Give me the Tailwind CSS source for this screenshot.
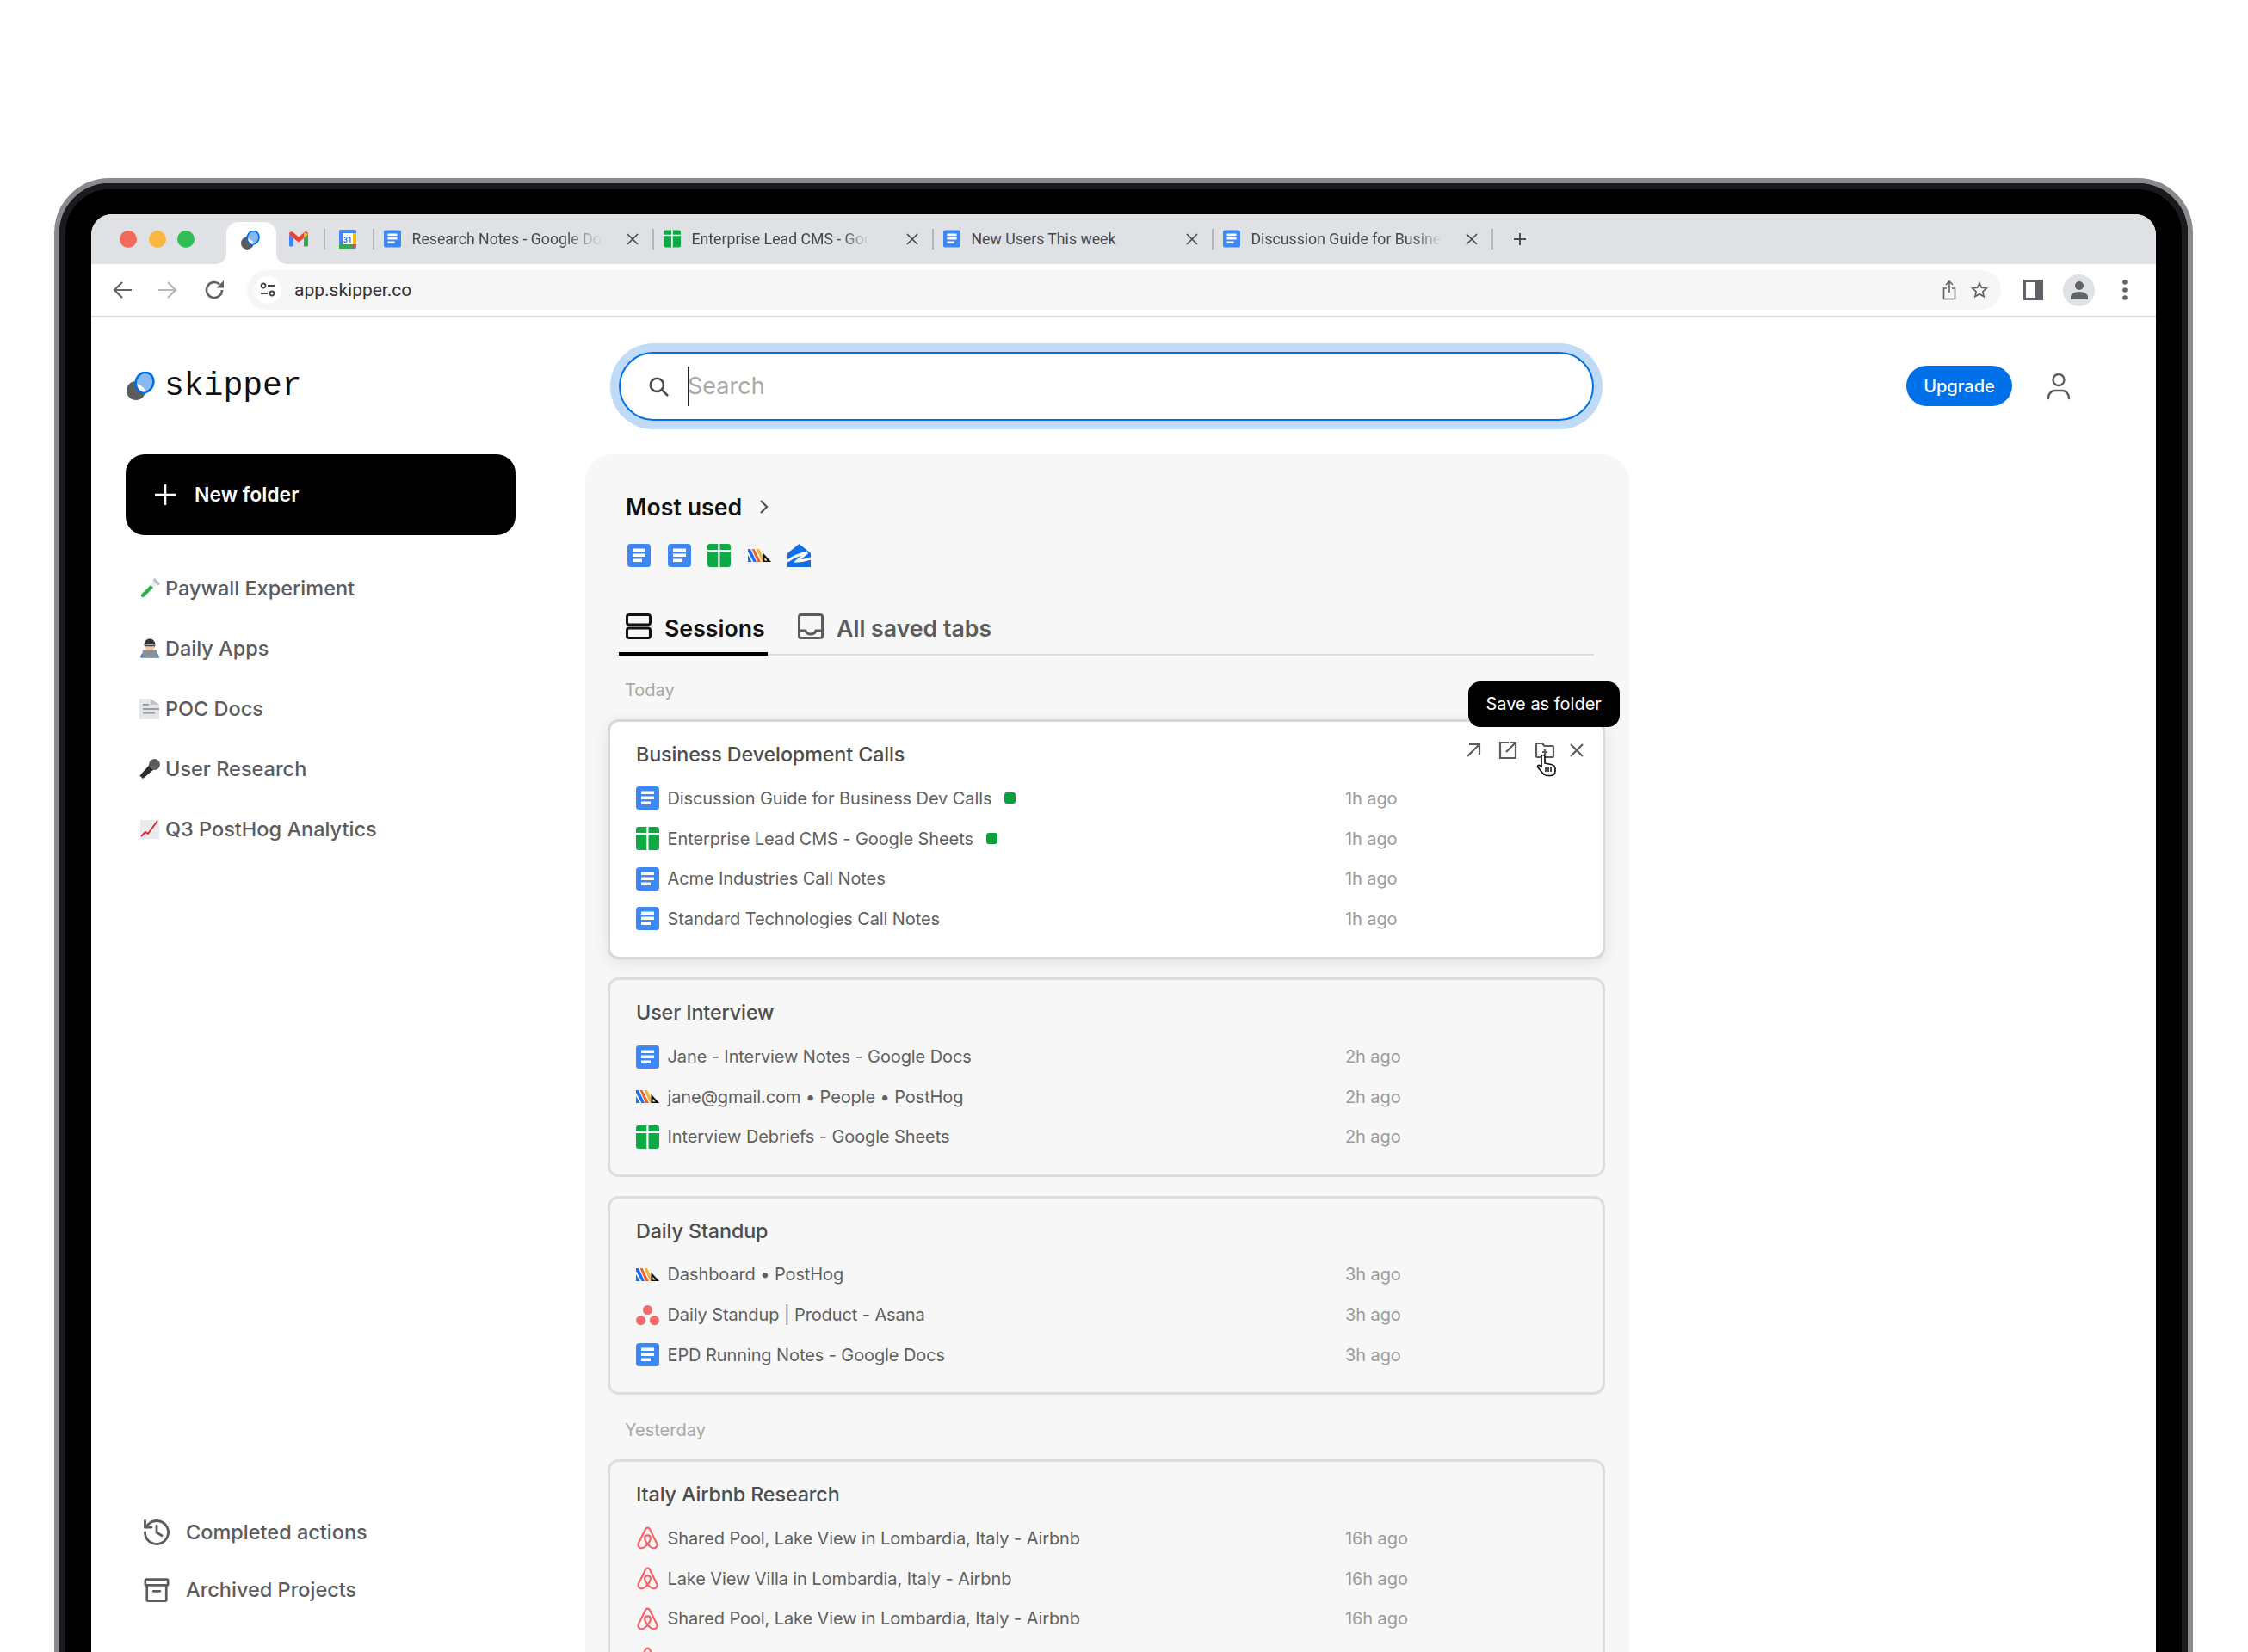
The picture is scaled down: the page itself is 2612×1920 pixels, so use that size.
<!DOCTYPE html>
<html lang="en">
<head>
    <meta charset="UTF-8">
    <meta name="viewport" content="width=device-width, initial-scale=1.0">
    <title>Skipper</title>
    <script src="https://cdn.jsdelivr.net/npm/@tailwindcss/browser@4"></script>
</head>
<body class="bg-white h-[1920px] overflow-hidden pt-[207px] pl-[63px] font-[family-name:Inter]">

    <!-- Shared favicons -->
    <svg class="hidden">
        <symbol id="docs" viewBox="0 0 27 27">
            <rect width="27" height="27" rx="3.5" fill="#3f87f2"/>
            <path d="M6 5.5h15v3.5H6zM6 11.5h15v3.5H6zM6 17.5h11v3.5H6z" fill="#fff"/>
        </symbol>
        <symbol id="sheets" viewBox="0 0 27 27">
            <rect width="27" height="27" rx="3" fill="#0fa945"/>
            <path d="M0 7h27v2H0zM12.300 0h2.200v27h-2.200z" fill="#fff"/>
        </symbol>
        <symbol id="posthog" viewBox="0 0 27 27">
            <path d="M0 6 L3 6 L10 21 H6.5 L0 9 Z M0 13 L4.5 21 H0 Z" fill="#1d6fe8"/>
            <path d="M4.5 6 H7.5 L15 21 H11 Z" fill="#f2622e"/>
            <path d="M9.5 6 H13 L19 18 V21 H16.5 Z" fill="#f5b33c"/>
            <path d="M17.5 10.5 L27 21 H17.5 Z" fill="#111"/>
            <path d="M19.5 16 L22.5 19.5 H19.5 Z" fill="#fff"/>
        </symbol>
        <symbol id="asana" viewBox="0 0 27 27">
            <circle cx="13.5" cy="7.5" r="5.6" fill="#f96a6c"/>
            <circle cx="5.6" cy="19.6" r="5.6" fill="#f96a6c"/>
            <circle cx="21.4" cy="19.6" r="5.6" fill="#f96a6c"/>
        </symbol>
        <symbol id="airbnb" viewBox="0 0 24 24">
            <path d="M12 1.5c-1 0-1.8.6-2.3 1.6L2.6 17.4c-.9 2.2-.1 4.2 1.7 4.8 2.1.7 4.8-.5 7.7-3.9-2.100-2.600-3-4.600-3-6.100 0-1.700 1.300-3 3-3s3 1.300 3 3c0 1.500-.9 3.500-3 6.100 2.900 3.400 5.600 4.600 7.700 3.900 1.800-.6 2.600-2.600 1.700-4.800L14.300 3.100C13.800 2.100 13 1.500 12 1.500z" fill="none" stroke="#fb5f63" stroke-width="1.900" stroke-linejoin="round"/>
        </symbol>
        <symbol id="tabx" viewBox="0 0 16 16">
            <path d="M2 2l12 12M14 2L2 14" fill="none" stroke="#45474a" stroke-width="1.600"/>
        </symbol>
        <symbol id="logo" viewBox="0 0 33 33">
            <circle cx="11" cy="22" r="11" fill="#5c5c5e"/>
            <ellipse cx="21" cy="12.5" rx="10.2" ry="11.8" transform="rotate(18 21 12.5)" fill="#8ab8f3" stroke="#0070e8" stroke-width="2.6"/>
            <path d="M12.5 14 C16 15 21 19 23 23 C19 25 13 22 12.5 14Z" fill="#fff"/>
        </symbol>
    </svg>

    <!-- Laptop bezel -->
    <div class="w-[2485px] h-[1760px] bg-black border-[6px] border-[#8a8a8e] rounded-t-[64px]">
        <div class="h-full border-[7px] border-[#1b1b1d] rounded-t-[58px] pt-[29px] px-[30px]">
            <div class="h-full bg-white rounded-t-[24px] overflow-hidden flex flex-col">

                <!-- Chrome tab strip -->
                <div class="h-[58px] shrink-0 bg-[#dfe1e5] flex items-center pl-[33px] font-[family-name:Roboto] text-[17.700px] text-[#45474a]">
                    <span class="w-5 h-5 rounded-full bg-[#f4695d]"></span>
                    <span class="w-5 h-5 rounded-full bg-[#f8b740] ml-[13.5px]"></span>
                    <span class="w-5 h-5 rounded-full bg-[#2fbe55] ml-[13.5px]"></span>
                    <div class="relative self-end ml-[36.5px] w-[58px] h-[49px] bg-white rounded-t-[14px] flex items-center justify-center pb-[8px] pr-[2px]">
                        <span class="absolute bottom-0 -left-3 w-3 h-3 bg-[radial-gradient(circle_at_0_0,transparent_11.5px,white_12px)]"></span>
                        <span class="absolute bottom-0 -right-3 w-3 h-3 bg-[radial-gradient(circle_at_100%_0,transparent_11.5px,white_12px)]"></span>
                        <svg class="w-[22px] h-[22px]"><use href="#logo"/></svg>
                    </div>
                    <svg class="ml-[15px] w-[22px] h-[18px]" viewBox="0 0 22 18">
                        <path d="M0 3v13a1.500 1.500 0 0 0 1.500 1.500H5V8z" fill="#4285f4"/>
                        <path d="M17 8v9.500h3.500A1.500 1.500 0 0 0 22 16V3z" fill="#34a853"/>
                        <path d="M0 3c0-2.500 2.800-3.500 4.500-2L11 6.500l6.500-5.500C19.200-.5 22 .5 22 3l-5 5-6 4.500L5 8z" fill="#ea4335"/>
                        <path d="M17 1.200 22 3l-5 5z" fill="#fbbc04"/>
                    </svg>
                    <span class="ml-[18px] w-[2px] h-6 bg-[#b4b6ba]"></span>
                    <svg class="ml-[16.500px] w-5 h-[22px]" viewBox="0 0 20 22">
                        <rect width="20" height="22" rx="2" fill="#4285f4"/>
                        <rect x="4" y="4" width="12" height="13" fill="#fff"/>
                        <rect x="16" y="4" width="4" height="13" fill="#fbbc04"/>
                        <rect y="17" width="16" height="5" fill="#34a853"/>
                        <path d="M16 17h4v1l-4 4z" fill="#ea4335"/>
                        <text x="10" y="14.500" text-anchor="middle" font-size="8.500" font-weight="700" fill="#1a73e8">31</text>
                    </svg>
                    <span class="ml-[18.500px] w-[2px] h-6 bg-[#b4b6ba]"></span>

                    <div class="flex w-[325px] items-center pl-[11px]">
                        <svg class="w-5 h-[21px]"><use href="#docs"/></svg>
                        <span class="ml-[13px] w-[221px] overflow-hidden whitespace-nowrap [mask-image:linear-gradient(to_right,black_80%,transparent)]">Research Notes - Google Docs</span>
                        <svg class="ml-[27px] w-4 h-4"><use href="#tabx"/></svg>
                        <span class="ml-auto w-[2px] h-6 bg-[#b4b6ba]"></span>
                    </div>
                    <div class="flex w-[325px] items-center pl-[11px]">
                        <svg class="w-5 h-[21px]"><use href="#sheets"/></svg>
                        <span class="ml-[13px] w-[206px] overflow-hidden whitespace-nowrap [mask-image:linear-gradient(to_right,black_85%,transparent)]">Enterprise Lead CMS - Google Sheets</span>
                        <svg class="ml-[42px] w-4 h-4"><use href="#tabx"/></svg>
                        <span class="ml-auto w-[2px] h-6 bg-[#b4b6ba]"></span>
                    </div>
                    <div class="flex w-[325px] items-center pl-[11px]">
                        <svg class="w-5 h-[21px]"><use href="#docs"/></svg>
                        <span class="ml-[13px] w-[221px] overflow-hidden whitespace-nowrap">New Users This week</span>
                        <svg class="ml-[27px] w-4 h-4"><use href="#tabx"/></svg>
                        <span class="ml-auto w-[2px] h-6 bg-[#b4b6ba]"></span>
                    </div>
                    <div class="flex w-[325px] items-center pl-[11px]">
                        <svg class="w-5 h-[21px]"><use href="#docs"/></svg>
                        <span class="ml-[13px] w-[221px] overflow-hidden whitespace-nowrap [mask-image:linear-gradient(to_right,black_85%,transparent)]">Discussion Guide for Business Dev Calls</span>
                        <svg class="ml-[27px] w-4 h-4"><use href="#tabx"/></svg>
                        <span class="ml-auto w-[2px] h-6 bg-[#b4b6ba]"></span>
                    </div>
                    <svg class="ml-[23px] w-4 h-4" viewBox="0 0 16 16"><path d="M8 1v14M1 8h14" stroke="#45474a" stroke-width="1.800"/></svg>
                </div>

                <!-- Chrome toolbar -->
                <div class="h-[62px] shrink-0 border-b-2 border-[#d9dbdc] flex items-center pl-[24px]">
                    <svg class="w-6 h-6" viewBox="0 0 24 24" fill="none" stroke="#5f6368" stroke-width="2.200"><path d="M23 12H3M12 3l-9 9 9 9"/></svg>
                    <svg class="ml-[29px] w-6 h-6" viewBox="0 0 24 24" fill="none" stroke="#b5b7ba" stroke-width="2.200"><path d="M1 12h20M12 3l9 9-9 9"/></svg>
                    <svg class="ml-[30px] w-6 h-6" viewBox="0 0 24 24" fill="none" stroke="#5f6368" stroke-width="2.600"><path d="M21 12a9 9 0 1 1-3-6.700"/><path d="M23 1v8.500h-8.500z" fill="#5f6368" stroke="none"/></svg>
                    <div class="ml-[26px] w-[2038px] h-[46px] rounded-full bg-[#f6f6f6] flex items-center pl-[8px] pr-[15px]">
                        <span class="w-8 h-8 rounded-full bg-white flex items-center justify-center">
                            <svg class="w-5 h-5" viewBox="0 0 20 20" fill="none" stroke="#444" stroke-width="1.800"><circle cx="5" cy="5" r="2.500"/><path d="M10 5h8M2 14h8"/><circle cx="15" cy="14" r="2.500"/></svg>
                        </span>
                        <span class="ml-[15px] pt-[1px] font-[family-name:Roboto] text-[21px] text-[#333]">app.skipper.co</span>
                        <svg class="ml-auto w-4 h-6" viewBox="0 0 16 24" fill="none" stroke="#5f6368" stroke-width="1.600"><path d="M8 15V2M4 6l4-4 4 4M5 10H1.500v12.500h13V10H11"/></svg>
                        <svg class="ml-[17px] w-5 h-5" viewBox="0 0 24 24" fill="none" stroke="#5f6368" stroke-width="2"><path d="M12 2.500l2.900 6.300 6.900.8-5.100 4.700 1.400 6.800-6.100-3.400-6.100 3.400 1.400-6.800-5.100-4.700 6.900-.8z"/></svg>
                    </div>
                    <span class="ml-[26px] w-[23px] h-6 border-[3px] border-r-[9px] border-[#5f6368]"></span>
                    <span class="ml-[23px] w-[37px] h-[37px] rounded-full bg-[#dfe1e5] flex items-center justify-center">
                        <svg class="w-[22px] h-[22px]" viewBox="0 0 22 22" fill="#5f6368"><circle cx="11" cy="6" r="5"/><path d="M1 22v-3c0-3 4-6 10-6s10 3 10 6v3z"/></svg>
                    </span>
                    <svg class="ml-[31px] w-2 h-6" viewBox="0 0 8 24" fill="#5f6368"><circle cx="4" cy="3" r="2.800"/><circle cx="4" cy="12" r="2.800"/><circle cx="4" cy="21" r="2.800"/></svg>
                </div>

                <!-- App header -->
                <div class="h-[159px] shrink-0 flex items-center">
                    <div class="w-[613px] pl-[41px] flex items-center">
                        <svg class="w-[33px] h-[33px]"><use href="#logo"/></svg>
                        <span class="ml-[11px] font-[family-name:'Liberation_Mono'] text-[38px] leading-none text-[#111]">skipper</span>
                    </div>
                    <div class="w-[1133px] h-[80px] rounded-[40px] bg-white border-2 border-[#0070e8] ring-[10px] ring-[#bfdbf7] flex items-center pl-[31px]">
                        <svg class="w-[26px] h-[26px]" viewBox="0 0 24 24" fill="none" stroke="#4d4d4d" stroke-width="2.400" stroke-linecap="round"><circle cx="10.500" cy="10.500" r="7"/><path d="M16 16l5.500 5.500"/></svg>
                        <span class="ml-[21px] w-[2px] h-[46px] bg-[#222]"></span>
                        <span class="-ml-[2px] pt-[2px] text-[27px] text-[#a9a9a9]">Search</span>
                    </div>
                    <button class="ml-[363px] w-[123px] h-[47px] rounded-full bg-[#0070e8] text-white text-[20px] font-medium">Upgrade</button>
                    <svg class="ml-[40px] w-7 h-8" viewBox="0 0 28 32" fill="none" stroke="#5c5c5c" stroke-width="2.400" stroke-linecap="round"><circle cx="14" cy="8.500" r="6.500"/><path d="M2 30c0-5 3-9 8-9h8c5 0 8 4 8 9"/></svg>
                </div>

                <div class="flex-1 flex">
                    <!-- Sidebar -->
                    <aside class="w-[574px] shrink-0 pl-[40px] text-[#5c5c5c] text-[23.500px] font-medium">
                        <button class="w-[453px] h-[94px] rounded-[22px] bg-black text-white flex items-center pl-[34px] text-[23px] font-semibold">
                            <svg class="w-6 h-6" viewBox="0 0 24 24" stroke="#fff" stroke-width="2.600"><path d="M12 0v24M0 12h24"/></svg>
                            <span class="ml-[22px]">New folder</span>
                        </button>
                        <ul class="mt-[27px]">
                            <li class="h-[70px] flex items-center pl-[16px]">
                                <svg class="w-6 h-6 shrink-0" viewBox="0 0 24 24"><path d="M18 3L3 18c-2 2 1 5 3 3L21 6z" fill="#e8edf0"/><path d="M13 8L2.500 18.500c-2 2 1 5 3 3L16 11z" fill="#2bb24c"/><path d="M16.500 1l6.500 6.500" stroke="#b9c3c9" stroke-width="3.400"/></svg>
                                <span class="ml-[6px]">Paywall Experiment</span>
                            </li>
                            <li class="h-[70px] flex items-center pl-[16px]">
                                <svg class="w-6 h-6 shrink-0" viewBox="0 0 24 24"><circle cx="12" cy="8" r="6.500" fill="#f2c6a8"/><path d="M5.500 8c0-5 3-7.500 6.500-7.500s6.500 2.500 6.500 7.500c-3-2-10-2-13 0z" fill="#333"/><path d="M6 8.500h12" stroke="#444" stroke-width="1.500"/><path d="M1 22.500c1-6 5-8 11-8s10 2 11 8z" fill="#2b7de0"/><path d="M4 13.500h16l1 9H3z" fill="#8c9095"/></svg>
                                <span class="ml-[6px]">Daily Apps</span>
                            </li>
                            <li class="h-[70px] flex items-center pl-[16px]">
                                <svg class="w-6 h-6 shrink-0" viewBox="0 0 24 24"><path d="M0 0h13l10 7v17H0z" fill="#e3e5e7"/><path d="M13 0v7h10z" fill="#bfc3c7"/><path d="M4 7h7M4 12h19M4 16.500h14" stroke="#9a9ea3" stroke-width="1.800"/></svg>
                                <span class="ml-[6px]">POC Docs</span>
                            </li>
                            <li class="h-[70px] flex items-center pl-[16px]">
                                <svg class="w-6 h-6 shrink-0" viewBox="0 0 24 24"><path d="M11.500 7L.5 19.500l3.500 3.500L17 12z" fill="#2c2c2c"/><circle cx="17.500" cy="6.500" r="6.500" fill="#5d5d5d"/></svg>
                                <span class="ml-[6px]">User Research</span>
                            </li>
                            <li class="h-[70px] flex items-center pl-[16px]">
                                <svg class="w-6 h-6 shrink-0" viewBox="0 0 24 24"><rect x="1" y="1" width="22" height="22" fill="#e8eaed"/><path d="M2 20l5-5 3 2L21 2" fill="none" stroke="#d92d2d" stroke-width="2"/></svg>
                                <span class="ml-[6px]">Q3 PostHog Analytics</span>
                            </li>
                        </ul>
                        <div class="mt-[748.500px]">
                            <div class="h-[67px] flex items-center pl-[21px]">
                                <svg class="w-[30px] h-[30px]" viewBox="2 2 20 20" fill="none" stroke="#5c5c5c" stroke-width="1.900" stroke-linecap="round" stroke-linejoin="round"><path d="M3 12a9 9 0 1 0 3-6.700L3 8"/><path d="M3 3v5h5"/><path d="M12 7v5l4 2.500"/></svg>
                                <span class="ml-[19px]">Completed actions</span>
                            </div>
                            <div class="h-[67px] flex items-center pl-[21px]">
                                <svg class="w-[30px] h-[30px]" viewBox="0 0 24 24" fill="none" stroke="#5c5c5c" stroke-width="2.200" stroke-linecap="round" stroke-linejoin="round"><rect x="1.500" y="2" width="21" height="5.500" rx="1"/><path d="M3 7.500V21a1 1 0 0 0 1 1h16a1 1 0 0 0 1-1V7.500"/><path d="M9 13h6"/></svg>
                                <span class="ml-[19px]">Archived Projects</span>
                            </div>
                        </div>
                    </aside>

                    <!-- Main panel -->
                    <main class="w-[1213px] bg-[#f7f7f7] rounded-[32px] pt-[44px]">
                        <div class="h-[34px] flex items-center pl-[47px]">
                            <h2 class="text-[26.700px] font-semibold text-[#111]">Most used</h2>
                            <svg class="ml-[18px] w-[16px] h-5" viewBox="0 0 16 20" fill="none" stroke="#4d4d4d" stroke-width="2.200"><path d="M4 3l7 7-7 7"/></svg>
                        </div>
                        <div class="mt-[25.500px] pl-[49px] flex gap-[19.500px]">
                            <svg class="w-[27px] h-[27px]"><use href="#docs"/></svg>
                            <svg class="w-[27px] h-[27px]"><use href="#docs"/></svg>
                            <svg class="w-[27px] h-[27px]"><use href="#sheets"/></svg>
                            <svg class="w-[27px] h-[27px]"><use href="#posthog"/></svg>
                            <svg class="w-[27px] h-[27px]" viewBox="0 0 27 27"><path d="M13.500 0L27 11v16H0V11z" fill="#0f6fe8"/><path d="M0 20C8 14 15 12 23 10L11 20c5 0 10-1 16-3" fill="none" stroke="#fff" stroke-width="3"/></svg>
                        </div>

                        <!-- Tabs -->
                        <div class="mt-[39.500px] ml-[39px] w-[1133px] h-[64px] border-b-2 border-[#dcdcdc] flex items-start text-[26.700px] font-semibold">
                            <div class="w-[173px] h-[64px] border-b-4 border-black flex items-start pl-[8px] pt-[15px] text-[#111]">
                                <svg class="w-[30px] h-[30px] shrink-0" viewBox="0 0 30 30" fill="none" stroke="#111" stroke-width="3"><rect x="1.500" y="1.500" width="27" height="11.500" rx="2.500"/><rect x="1.500" y="17" width="27" height="11.500" rx="2.500"/></svg>
                                <span class="ml-[15px] leading-[34px]">Sessions</span>
                            </div>
                            <div class="ml-[35px] flex items-start pt-[15px] text-[#5c5c5c]">
                                <svg class="w-[30px] h-[30px] shrink-0" viewBox="0 0 30 30" fill="none" stroke="#5c5c5c" stroke-width="3"><rect x="1.500" y="1.500" width="27" height="27" rx="2.500"/><path d="M2 20h7c1 3 3 4 6 4s5-1 6-4h7"/></svg>
                                <span class="ml-[15px] leading-[34px]">All saved tabs</span>
                            </div>
                        </div>

                        <p class="mt-[27px] ml-[46px] h-[26px] leading-[26px] text-[20px] text-[#a8a8a8]">Today</p>

                        <div class="ml-[26px] w-[1159px] text-[20px] tracking-[-0.1px] text-[#5f5f5f]">
                            <!-- Hovered session -->
                            <section class="relative mt-[21px] bg-white border-[3px] border-[#d8d8d8] rounded-[13px] pt-[23px] pl-[30px] pb-[20.300px] shadow-[0_4px_18px_rgba(0,0,0,0.09)]">
                                <h3 class="h-[30px] leading-[30px] text-[23.300px] font-medium text-[#4d4d4d]">Business Development Calls</h3>
                                <ul class="mt-[12.670px]">
                                    <li class="h-[46.670px] grid grid-cols-[824px_auto] items-center"><span class="flex items-center"><svg class="w-[27px] h-[27px] mr-[9.500px]"><use href="#docs"/></svg>Discussion Guide for Business Dev Calls<i class="ml-[15px] w-[13px] h-[13px] rounded-[3px] bg-[#0c9f3e]"></i></span><span class="text-[#9b9b9b]">1h ago</span></li>
                                    <li class="h-[46.670px] grid grid-cols-[824px_auto] items-center"><span class="flex items-center"><svg class="w-[27px] h-[27px] mr-[9.500px]"><use href="#sheets"/></svg>Enterprise Lead CMS - Google Sheets<i class="ml-[15px] w-[13px] h-[13px] rounded-[3px] bg-[#0c9f3e]"></i></span><span class="text-[#9b9b9b]">1h ago</span></li>
                                    <li class="h-[46.670px] grid grid-cols-[824px_auto] items-center"><span class="flex items-center"><svg class="w-[27px] h-[27px] mr-[9.500px]"><use href="#docs"/></svg>Acme Industries Call Notes</span><span class="text-[#9b9b9b]">1h ago</span></li>
                                    <li class="h-[46.670px] grid grid-cols-[824px_auto] items-center"><span class="flex items-center"><svg class="w-[27px] h-[27px] mr-[9.500px]"><use href="#docs"/></svg>Standard Technologies Call Notes</span><span class="text-[#9b9b9b]">1h ago</span></li>
                                </ul>
                                <div class="absolute left-[996.700px] -top-[47.300px] w-[176px] h-[53px] rounded-[14px] bg-black text-white text-[20px] tracking-normal flex items-center justify-center">Save as folder</div>
                                <div class="absolute left-[991px] top-[21px] flex">
                                    <svg class="w-6 h-6" viewBox="0 0 24 24" fill="none" stroke="#5c5c5c" stroke-width="2.200"><path d="M5 19L19 5M7 5h12v12"/></svg>
                                    <svg class="ml-[16px] w-6 h-6" viewBox="0 0 24 24" fill="none" stroke="#5c5c5c" stroke-width="2.200"><path d="M13 3H3v18h18V11M10 14L21 3M14 3h7v7"/></svg>
                                    <svg class="ml-[19px] w-6 h-6" viewBox="0 0 24 24" fill="none" stroke="#5c5c5c" stroke-width="2.200" stroke-linejoin="round"><path d="M2 5a1 1 0 0 1 1-1h6l2.500 3H21a1 1 0 0 1 1 1v11a1 1 0 0 1-1 1H3a1 1 0 0 1-1-1z"/><path d="M12 11v6M9 14h6"/></svg>
                                    <svg class="ml-[13px] w-6 h-6" viewBox="0 0 24 24" fill="none" stroke="#5c5c5c" stroke-width="2.200"><path d="M5 5l14 14M19 5L5 19"/></svg>
                                </div>
                                <svg class="absolute left-[1076px] top-[38px] w-6 h-[26px]" viewBox="0 0 24 26"><path d="M6 2.500a2 2 0 0 1 4 0V10l7 1.500c3 .600 5 1.500 5 4.500v3c0 3-2 5.500-5 5.500h-5c-2.500 0-3.500-1.500-5-3.500L2 15c-1.500-2 1-3.500 2.500-2L6 14.500z" fill="#fff" stroke="#111" stroke-width="1.700" stroke-linejoin="round"/><path d="M11 15v5M14 15v5M17 15v5" stroke="#111" stroke-width="1.500"/></svg>
                            </section>

                            <section class="mt-[21.500px] border-[3px] border-[#dedede] rounded-[13px] pt-[23px] pl-[30px] pb-[20.300px]">
                                <h3 class="h-[30px] leading-[30px] text-[23.300px] font-medium text-[#4d4d4d]">User Interview</h3>
                                <ul class="mt-[12.670px]">
                                    <li class="h-[46.670px] grid grid-cols-[824px_auto] items-center"><span class="flex items-center"><svg class="w-[27px] h-[27px] mr-[9.500px]"><use href="#docs"/></svg>Jane - Interview Notes - Google Docs</span><span class="text-[#9b9b9b]">2h ago</span></li>
                                    <li class="h-[46.670px] grid grid-cols-[824px_auto] items-center"><span class="flex items-center"><svg class="w-[27px] h-[27px] mr-[9.500px]"><use href="#posthog"/></svg>jane@gmail.com • People • PostHog</span><span class="text-[#9b9b9b]">2h ago</span></li>
                                    <li class="h-[46.670px] grid grid-cols-[824px_auto] items-center"><span class="flex items-center"><svg class="w-[27px] h-[27px] mr-[9.500px]"><use href="#sheets"/></svg>Interview Debriefs - Google Sheets</span><span class="text-[#9b9b9b]">2h ago</span></li>
                                </ul>
                            </section>

                            <section class="mt-[21.500px] border-[3px] border-[#dedede] rounded-[13px] pt-[23px] pl-[30px] pb-[20.300px]">
                                <h3 class="h-[30px] leading-[30px] text-[23.300px] font-medium text-[#4d4d4d]">Daily Standup</h3>
                                <ul class="mt-[12.670px]">
                                    <li class="h-[46.670px] grid grid-cols-[824px_auto] items-center"><span class="flex items-center"><svg class="w-[27px] h-[27px] mr-[9.500px]"><use href="#posthog"/></svg>Dashboard • PostHog</span><span class="text-[#9b9b9b]">3h ago</span></li>
                                    <li class="h-[46.670px] grid grid-cols-[824px_auto] items-center"><span class="flex items-center"><svg class="w-[27px] h-[27px] mr-[9.500px]"><use href="#asana"/></svg>Daily Standup | Product - Asana</span><span class="text-[#9b9b9b]">3h ago</span></li>
                                    <li class="h-[46.670px] grid grid-cols-[824px_auto] items-center"><span class="flex items-center"><svg class="w-[27px] h-[27px] mr-[9.500px]"><use href="#docs"/></svg>EPD Running Notes - Google Docs</span><span class="text-[#9b9b9b]">3h ago</span></li>
                                </ul>
                            </section>

                            <p class="mt-[27.500px] ml-[20px] h-[26px] leading-[26px] text-[20px] tracking-normal text-[#a8a8a8]">Yesterday</p>

                            <section class="mt-[21px] border-[3px] border-[#dedede] rounded-[13px] pt-[23px] pl-[30px] pb-[20.300px]">
                                <h3 class="h-[30px] leading-[30px] text-[23.300px] font-medium text-[#4d4d4d]">Italy Airbnb Research</h3>
                                <ul class="mt-[12.670px]">
                                    <li class="h-[46.670px] grid grid-cols-[824px_auto] items-center"><span class="flex items-center"><svg class="w-[27px] h-[27px] mr-[9.500px]"><use href="#airbnb"/></svg>Shared Pool, Lake View in Lombardia, Italy - Airbnb</span><span class="text-[#9b9b9b]">16h ago</span></li>
                                    <li class="h-[46.670px] grid grid-cols-[824px_auto] items-center"><span class="flex items-center"><svg class="w-[27px] h-[27px] mr-[9.500px]"><use href="#airbnb"/></svg>Lake View Villa in Lombardia, Italy - Airbnb</span><span class="text-[#9b9b9b]">16h ago</span></li>
                                    <li class="h-[46.670px] grid grid-cols-[824px_auto] items-center"><span class="flex items-center"><svg class="w-[27px] h-[27px] mr-[9.500px]"><use href="#airbnb"/></svg>Shared Pool, Lake View in Lombardia, Italy - Airbnb</span><span class="text-[#9b9b9b]">16h ago</span></li>
                                    <li class="h-[46.670px] grid grid-cols-[824px_auto] items-center"><span class="flex items-center"><svg class="w-[27px] h-[27px] mr-[9.500px]"><use href="#airbnb"/></svg></span></li>
                                </ul>
                            </section>
                        </div>
                    </main>
                </div>
            </div>
        </div>
    </div>
</body>
</html>
